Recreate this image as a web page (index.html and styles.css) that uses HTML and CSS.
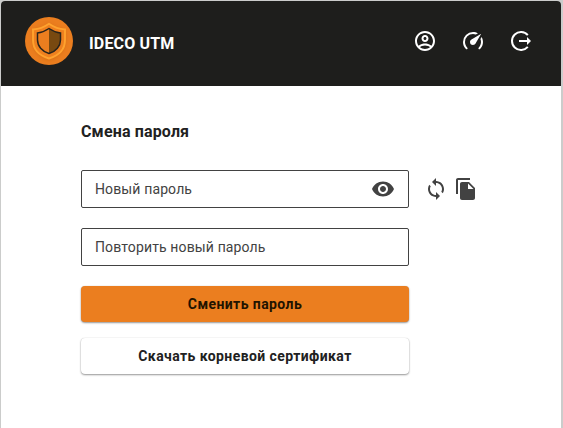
FILE: index.html
```html
<!DOCTYPE html>
<html lang="ru">
<head>
<meta charset="utf-8">
<title>IDECO UTM</title>
<link rel="stylesheet" href="styles.css">
</head>
<body>
<div class="window">
  <header class="header">
    <svg class="logo" viewBox="0 0 48 48">
      <defs><filter id="glow" x="-30%" y="-30%" width="160%" height="160%"><feGaussianBlur stdDeviation="2"/></filter></defs>
      <circle cx="24" cy="24" r="24" fill="#eb7e1f"/>
      <path d="M24 7Q16 13 8 13V23C8 32 14 40 24 43C34 40 40 32 40 23V13Q32 13 24 7Z" fill="#b85a10" opacity=".5" filter="url(#glow)"/>
      <path d="M24 6.800Q16.500 12 8 12.500V23C8 32 14 38.500 24 41.500C34 38.500 40 32 40 23V12.500Q31.500 12 24 6.800Z" fill="#ee801f" stroke="#ffa22e" stroke-width="1.900"/>
      <path d="M24 11.500Q18 15.500 12.500 16V23C12.500 29 17 34.500 24 36.500C31 34.500 35.500 29 35.500 23V16Q30 15.500 24 11.500Z" fill="#eb7e1f"/>
      <path d="M24 11.500V36.500C31 34.500 35.500 29 35.500 23V16Q30 15.500 24 11.500Z" fill="#784910"/>
      <path d="M24 11.500Q18 15.500 12.500 16V23C12.500 29 17 34.500 24 36.500C31 34.500 35.500 29 35.500 23V16Q30 15.500 24 11.500Z" fill="none" stroke="#28231c" stroke-width="1.500"/>
    </svg>
    <span class="brand">IDECO UTM</span>
    <nav class="actions">
      <svg class="icon" viewBox="0 0 24 24"><path d="M12 2C6.480 2 2 6.480 2 12s4.480 10 10 10 10-4.480 10-10S17.520 2 12 2zM7.070 18.280c.43-.9 3.050-1.780 4.930-1.780s4.510.88 4.930 1.780C15.570 19.360 13.860 20 12 20s-3.570-.64-4.930-1.720zm11.290-1.450c-1.430-1.740-4.900-2.330-6.360-2.330s-4.930.59-6.360 2.330C4.620 15.490 4 13.820 4 12c0-4.410 3.590-8 8-8s8 3.590 8 8c0 1.820-.62 3.490-1.640 4.830zM12 6c-1.940 0-3.500 1.560-3.500 3.500S10.060 13 12 13s3.500-1.560 3.500-3.500S13.940 6 12 6zm0 5c-.83 0-1.500-.67-1.500-1.500S11.170 8 12 8s1.500.67 1.500 1.500S12.830 11 12 11z"/></svg>
      <svg class="icon" viewBox="0 0 24 24"><path d="M12,16A3,3 0 0,1 9,13C9,11.880 9.610,10.900 10.500,10.390L20.210,4.770L14.680,14.350C14.180,15.330 13.170,16 12,16M12,3C13.810,3 15.500,3.500 16.970,4.320L14.870,5.530C14,5.190 13,5 12,5A8,8 0 0,0 4,13C4,15.210 4.890,17.210 6.340,18.650H6.350C6.740,19.040 6.740,19.670 6.350,20.060C5.960,20.450 5.320,20.450 4.930,20.070C3.120,18.260 2,15.760 2,13A10,10 0 0,1 12,3M22,13C22,15.760 20.880,18.260 19.070,20.070C18.680,20.450 18.050,20.450 17.660,20.060C17.270,19.670 17.270,19.040 17.660,18.650C19.110,17.200 20,15.210 20,13C20,12 19.810,11 19.460,10.100L20.670,8C21.500,9.500 22,11.180 22,13Z"/></svg>
      <svg class="icon" viewBox="0 0 24 24"><path d="M18.800 6.100A9 9 0 1 0 18.800 17.900" fill="none" stroke="currentColor" stroke-width="2"/><path d="M10 11H18V8L22 12L18 16V13H10Z"/></svg>
    </nav>
  </header>
  <main class="content">
    <h1 class="title">Смена пароля</h1>
    <form class="form">
      <div class="row">
        <div class="field">
          <span class="label">Новый пароль</span>
          <svg class="icon" viewBox="0 0 24 24"><path d="M12 4.500C7 4.500 2.730 7.610 1 12c1.730 4.390 6 7.500 11 7.500s9.270-3.110 11-7.500c-1.730-4.390-6-7.500-11-7.500zM12 17c-2.760 0-5-2.240-5-5s2.240-5 5-5 5 2.240 5 5-2.240 5-5 5zm0-8c-1.660 0-3 1.340-3 3s1.340 3 3 3 3-1.340 3-3-1.340-3-3-3z"/></svg>
        </div>
        <div class="tools">
          <svg class="icon" viewBox="0 0 24 24"><path d="M12 4V1L8 5l4 4V6c3.310 0 6 2.690 6 6 0 1.010-.25 1.970-.7 2.800l1.460 1.460C19.540 15.030 20 13.570 20 12c0-4.420-3.580-8-8-8zm0 14c-3.310 0-6-2.690-6-6 0-1.010.25-1.970.7-2.800L5.240 7.740C4.460 8.970 4 10.430 4 12c0 4.420 3.580 8 8 8v3l4-4-4-4v3z"/></svg>
          <svg class="icon" viewBox="0 0 24 24"><path d="M16 1H4c-1.100 0-2 .9-2 2v14h2V3h12V1zm-1 4l6 6v10c0 1.100-.9 2-2 2H7.990C6.890 23 6 22.100 6 21l.01-14c0-1.100.89-2 1.990-2h7zm-1 7h5.500L14 6.500V12z"/></svg>
        </div>
      </div>
      <div class="field"><span class="label">Повторить новый пароль</span></div>
      <button class="button primary" type="button">Сменить пароль</button>
      <button class="button" type="button">Скачать корневой сертификат</button>
    </form>
  </main>
</div>
</body>
</html>
```
FILE: styles.css
```css
* { box-sizing: border-box; }
body {
  margin: 0;
  height: 428px;
  padding: 1px 2px 0 1px;
  overflow: hidden;
  background: #cbcccb;
  font-family: Roboto, sans-serif;
  color: #212121;
}
.window {
  height: 427px;
  background: #fff;
  border-radius: 4px 4px 0 0;
  overflow: hidden;
}
.header {
  display: flex;
  align-items: center;
  height: 85px;
  padding: 0 28px 5px 24px;
  background: #1e1e1c;
  color: #fff;
}
.logo { width: 48px; height: 48px; }
.brand {
  margin: 5px 0 0 16px;
  font-size: 16px;
  font-weight: 700;
  letter-spacing: .15px;
}
.actions {
  display: flex;
  gap: 24px;
  margin-left: auto;
}
.icon {
  display: block;
  flex: none;
  width: 24px;
  height: 24px;
  fill: currentColor;
}
.content { padding: 34px 0 0 80px; }
.title {
  margin: 0 0 26px;
  font-size: 16px;
  line-height: 24px;
  font-weight: 700;
  letter-spacing: .15px;
}
.form { display: flex; flex-direction: column; }
.row {
  display: flex;
  align-items: center;
  gap: 15px;
  margin-bottom: 20px;
}
.field {
  display: flex;
  align-items: center;
  justify-content: space-between;
  width: 328px;
  height: 38px;
  padding: 0 13px;
  border: 1px solid #424242;
  border-radius: 2px;
  color: #424242;
}
.label {
  font-size: 14px;
  letter-spacing: .13px;
}
.tools {
  display: flex;
  gap: 6px;
  color: #424242;
}
.button {
  width: 328px;
  height: 36px;
  margin: 16px 0 0;
  padding: 0;
  border: 0;
  border-radius: 4px;
  background: #fff;
  color: #212121;
  font: 700 14px Roboto, sans-serif;
  letter-spacing: .42px;
  box-shadow: 0 1px 2px rgba(0, 0, 0, .4), 0 0 1px rgba(0, 0, 0, .2);
}
.primary {
  margin-top: 20px;
  background: #eb7e1f;
  color: #211300;
}
```
